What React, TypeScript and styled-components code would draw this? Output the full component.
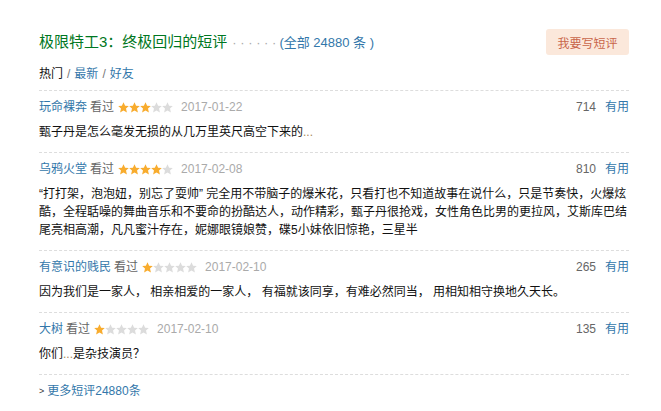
import React from "react";
import styled, { createGlobalStyle } from "styled-components";

const Global = createGlobalStyle`
  html, body { margin: 0; padding: 0; background: #fff; }
  body { font-family: "Liberation Sans", Arial, "Noto Sans CJK SC", sans-serif; font-size: 12px; color: #111; }
  a { text-decoration: none; }
`;

const Page = styled.div`
  padding: 29px 0 0 39px;
  width: 590px;
`;

const TitleRow = styled.div`
  display: flex;
  align-items: center;
  justify-content: space-between;
  height: 26px;
`;

const Title = styled.h2`
  margin: 0;
  font-size: 15px;
  font-weight: normal;
  color: #007722;
  display: flex;
  align-items: baseline;
  line-height: 20px;
`;

const Dots = styled.span`
  color: #aaa;
  font-size: 13px;
  margin: 0 3px 0 5px;
`;

const AllLink = styled.a`
  color: #3377aa;
  font-size: 13px;
`;

const WriteButton = styled.a`
  display: flex;
  align-items: center;
  justify-content: center;
  width: 83px;
  height: 26px;
  box-sizing: border-box;
  background: #fbe8db;
  color: #c9664a;
  border-radius: 3px;
  font-size: 12px;
`;

const Tabs = styled.div`
  margin-top: 10px;
  line-height: 18px;
  font-size: 12px;
  display: flex;
  align-items: center;
`;

const Tab = styled.a<{ $active?: boolean }>`
  color: ${(p) => (p.$active ? "#111" : "#3377aa")};
`;

const Sep = styled.span`
  color: #777;
  margin: 0 4px;
`;

const List = styled.div`
  margin-top: 7px;
  border-top: 1px dashed #ddd;
`;

const Item = styled.div`
  padding: 7px 0 11px;
  border-bottom: 1px dashed #ddd;
`;

const ItemHead = styled.div`
  display: flex;
  align-items: center;
  justify-content: space-between;
  line-height: 18px;
  height: 18px;
`;

const Info = styled.div`
  display: flex;
  align-items: center;
`;

const Name = styled.a`
  color: #3377aa;
`;

const Seen = styled.span`
  color: #666;
  margin: 0 4px 0 3px;
`;

const Stars = styled.span`
  display: inline-flex;
  margin-right: 8px;
`;

const DateText = styled.span`
  color: #aaa;
`;

const Votes = styled.div`
  display: flex;
  align-items: center;
`;

const Count = styled.span`
  color: #666;
  margin-right: 9px;
`;

const Useful = styled.a`
  color: #3377aa;
`;

const Body = styled.p`
  margin: 7px 0 0;
  line-height: 18px;
  color: #111;
  word-break: break-all;
`;

const Ellip = styled.span`
  color: #a98a5a;
`;

const More = styled.div`
  margin-top: 7px;
  line-height: 18px;
  display: flex;
  align-items: center;
`;

const Arrow = styled.span`
  color: #333;
  font-size: 9px;
  margin-right: 3px;
`;

const MoreLink = styled.a`
  color: #3377aa;
`;

const Star: React.FC<{ on: boolean }> = ({ on }) => (
  <svg width="11" height="11" viewBox="0 0 11 11">
    <polygon
      points="5.5,0.3 7.1,3.8 10.8,4.1 8,6.6 8.9,10.5 5.5,8.5 2.1,10.5 3,6.6 0.2,4.1 3.9,3.8"
      fill={on ? "#f8ac2e" : "#dcdcdc"}
    />
  </svg>
);

const Rating: React.FC<{ n: number }> = ({ n }) => (
  <Stars>
    {[0, 1, 2, 3, 4].map((i) => (
      <Star key={i} on={i < n} />
    ))}
  </Stars>
);

type C = { name: string; stars: number; date: string; votes: string; body: React.ReactNode };

const comments: C[] = [
  {
    name: "玩命裸奔",
    stars: 3,
    date: "2017-01-22",
    votes: "714",
    body: (
      <>
        甄子丹是怎么毫发无损的从几万里英尺高空下来的<Ellip>...</Ellip>
      </>
    ),
  },
  {
    name: "乌鸦火堂",
    stars: 4,
    date: "2017-02-08",
    votes: "810",
    body:
      "“打打架，泡泡妞，别忘了耍帅” 完全用不带脑子的爆米花，只看打也不知道故事在说什么，只是节奏快，火爆炫酷，全程聒噪的舞曲音乐和不要命的扮酷达人，动作精彩，甄子丹很抢戏，女性角色比男的更拉风，艾斯库巴结尾亮相高潮，凡凡蜜汁存在，妮娜眼镜娘赞，碟5小妹依旧惊艳，三星半",
  },
  {
    name: "有意识的贱民",
    stars: 1,
    date: "2017-02-10",
    votes: "265",
    body: "因为我们是一家人， 相亲相爱的一家人， 有福就该同享，有难必然同当， 用相知相守换地久天长。",
  },
  {
    name: "大树",
    stars: 1,
    date: "2017-02-10",
    votes: "135",
    body: (
      <>
        你们<Ellip>...</Ellip>是杂技演员？
      </>
    ),
  },
];

export default function App() {
  return (
    <>
      <Global />
      <Page>
        <TitleRow>
          <Title>
            极限特工3：终极回归的短评
            <Dots>· · · · · ·</Dots>
            <AllLink>(全部 24880 条 )</AllLink>
          </Title>
          <WriteButton>我要写短评</WriteButton>
        </TitleRow>
        <Tabs>
          <Tab $active>热门</Tab>
          <Sep>/</Sep>
          <Tab>最新</Tab>
          <Sep>/</Sep>
          <Tab>好友</Tab>
        </Tabs>
        <List>
          {comments.map((c) => (
            <Item key={c.name}>
              <ItemHead>
                <Info>
                  <Name>{c.name}</Name>
                  <Seen>看过</Seen>
                  <Rating n={c.stars} />
                  <DateText>{c.date}</DateText>
                </Info>
                <Votes>
                  <Count>{c.votes}</Count>
                  <Useful>有用</Useful>
                </Votes>
              </ItemHead>
              <Body>{c.body}</Body>
            </Item>
          ))}
        </List>
        <More>
          <Arrow>&gt;</Arrow>
          <MoreLink>更多短评24880条</MoreLink>
        </More>
      </Page>
    </>
  );
}
